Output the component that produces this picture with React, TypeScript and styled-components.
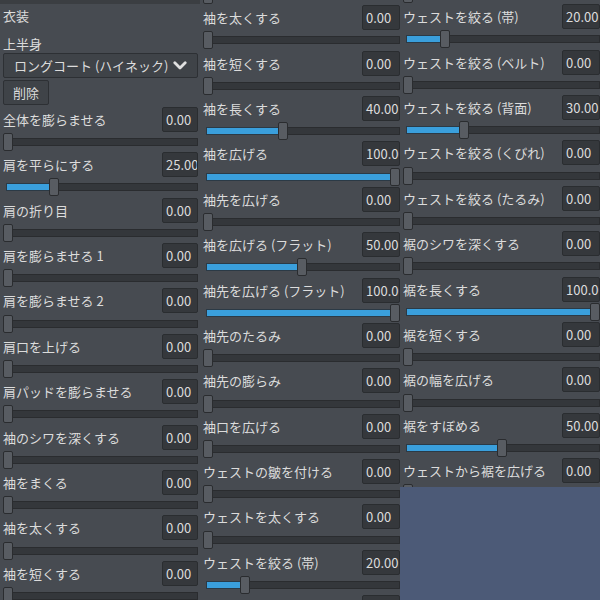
import React from "react";
import styled, { createGlobalStyle } from "styled-components";

const Global = createGlobalStyle`
  html, body { margin: 0; padding: 0; background: #4c5a77; }
  body {
    font-family: "Noto Sans CJK JP", "Noto Sans", sans-serif;
    font-size: 13px;
    color: #dcdcdc;
  }
  * { box-sizing: border-box; }
`;

const Page = styled.div`
  display: grid;
  grid-template-columns: 200px 200px 200px;
  align-items: start;
  width: 600px;
  height: 600px;
  overflow: hidden;
`;

const Column = styled.div<{ $h: number }>`
  height: ${(p) => p.$h}px;
  overflow: hidden;
  background: #474b51;
`;

const Scroller = styled.div<{ $offset: number; $pr: number }>`
  margin-top: ${(p) => p.$offset}px;
  padding: 0 ${(p) => p.$pr}px 0 3px;
  display: flex;
  flex-direction: column;
`;

const TopStrip = styled.div`
  height: 4px;
  background: #3b3e42;
`;

const SectionTitle = styled.div`
  height: 24px;
  line-height: 24px;
`;

const GroupLabel = styled.div`
  height: 25px;
  padding-top: 7px;
  line-height: 18px;
`;

const Dropdown = styled.div`
  height: 25px;
  margin-bottom: 2px;
  display: flex;
  align-items: center;
  justify-content: space-between;
  padding: 0 10px;
  background: #3f4348;
  border: 1px solid #2d3034;
  border-radius: 2px;
  white-space: nowrap;
`;

const Button = styled.div`
  align-self: flex-start;
  height: 25px;
  margin-bottom: 1.7px;
  padding: 0 9px;
  line-height: 23px;
  background: #3f4348;
  border: 1px solid #2d3034;
  border-radius: 2px;
`;

const Item = styled.div`
  height: 45.4px;
  display: flex;
  flex-direction: column;
`;

const LabelRow = styled.div`
  height: 25.4px;
  display: grid;
  grid-template-columns: 159px 1fr;
  align-items: center;
`;

const Label = styled.span`
  white-space: nowrap;
  overflow: visible;
`;

const ValueBox = styled.div`
  height: 25px;
  line-height: 23px;
  padding-left: 3px;
  background: #35383c;
  border: 1px solid #2a2d30;
  border-radius: 2px;
  white-space: nowrap;
  overflow: hidden;
`;

const SliderRow = styled.div`
  height: 20px;
  display: flex;
  align-items: center;
`;

const Fill = styled.div`
  flex: none;
  height: 8px;
  margin-left: 3px;
  background: #3a9fdc;
  border: 1px solid #2b3a46;
  border-right: none;
`;

const Handle = styled.div`
  flex: none;
  width: 10px;
  height: 18px;
  background: #585c62;
  border: 1px solid #2a2c2f;
  border-radius: 2px;
`;

const Rest = styled.div`
  flex: 1;
  height: 8px;
  background: #34373b;
  border: 1px solid #2a2c2f;
  border-left: none;
  border-radius: 0 1px 1px 0;
`;

type Entry = [string, number];

const ALL: Entry[] = [
  ["全体を膨らませる", 0],
  ["肩を平らにする", 25],
  ["肩の折り目", 0],
  ["肩を膨らませる 1", 0],
  ["肩を膨らませる 2", 0],
  ["肩口を上げる", 0],
  ["肩パッドを膨らませる", 0],
  ["袖のシワを深くする", 0],
  ["袖をまくる", 0],
  ["袖を太くする", 0],
  ["袖を短くする", 0],
  ["袖を長くする", 40],
  ["袖を広げる", 100],
  ["袖先を広げる", 0],
  ["袖を広げる (フラット)", 50],
  ["袖先を広げる (フラット)", 100],
  ["袖先のたるみ", 0],
  ["袖先の膨らみ", 0],
  ["袖口を広げる", 0],
  ["ウェストの皺を付ける", 0],
  ["ウェストを太くする", 0],
  ["ウェストを絞る (帯)", 20],
  ["ウェストを絞る (ベルト)", 0],
  ["ウェストを絞る (背面)", 30],
  ["ウェストを絞る (くびれ)", 0],
  ["ウェストを絞る (たるみ)", 0],
  ["裾のシワを深くする", 0],
  ["裾を長くする", 100],
  ["裾を短くする", 0],
  ["裾の幅を広げる", 0],
  ["裾をすぼめる", 50],
  ["ウェストから裾を広げる", 0],
];

const Slider: React.FC<{ value: number }> = ({ value }) => {
  const p = value / 100;
  return (
    <SliderRow>
      {p > 0 && <Fill style={{ width: `calc(${p} * (100% - 10px) - 3px)` }} />}
      <Handle />
      <Rest />
    </SliderRow>
  );
};

const SliderItem: React.FC<{ entry: Entry }> = ({ entry }) => (
  <Item>
    <LabelRow>
      <Label>{entry[0]}</Label>
      <ValueBox>{entry[1].toFixed(2)}</ValueBox>
    </LabelRow>
    <Slider value={entry[1]} />
  </Item>
);

const Chevron = () => (
  <svg width="14" height="9" viewBox="0 0 14 9">
    <polyline
      points="1.8,1.8 7,7 12.2,1.8"
      fill="none"
      stroke="#e0e0e0"
      strokeWidth="2.8"
      strokeLinecap="round"
      strokeLinejoin="round"
    />
  </svg>
);

export default function App() {
  return (
    <>
      <Global />
      <Page>
        <Column $h={600}>
          <TopStrip />
          <Scroller $offset={0} $pr={2}>
            <SectionTitle>衣装</SectionTitle>
            <GroupLabel>上半身</GroupLabel>
            <Dropdown>
              <span>ロングコート (ハイネック)</span>
              <Chevron />
            </Dropdown>
            <Button>削除</Button>
            {ALL.slice(0, 11).map((e, i) => (
              <SliderItem key={i} entry={e} />
            ))}
          </Scroller>
        </Column>
        <Column $h={600}>
          <Scroller $offset={-40.4} $pr={0}>
            {ALL.slice(8, 23).map((e, i) => (
              <SliderItem key={i} entry={e} />
            ))}
          </Scroller>
        </Column>
        <Column $h={487}>
          <Scroller $offset={-41.4} $pr={0}>
            {ALL.slice(20, 32).map((e, i) => (
              <SliderItem key={i} entry={e} />
            ))}
          </Scroller>
        </Column>
      </Page>
    </>
  );
}
